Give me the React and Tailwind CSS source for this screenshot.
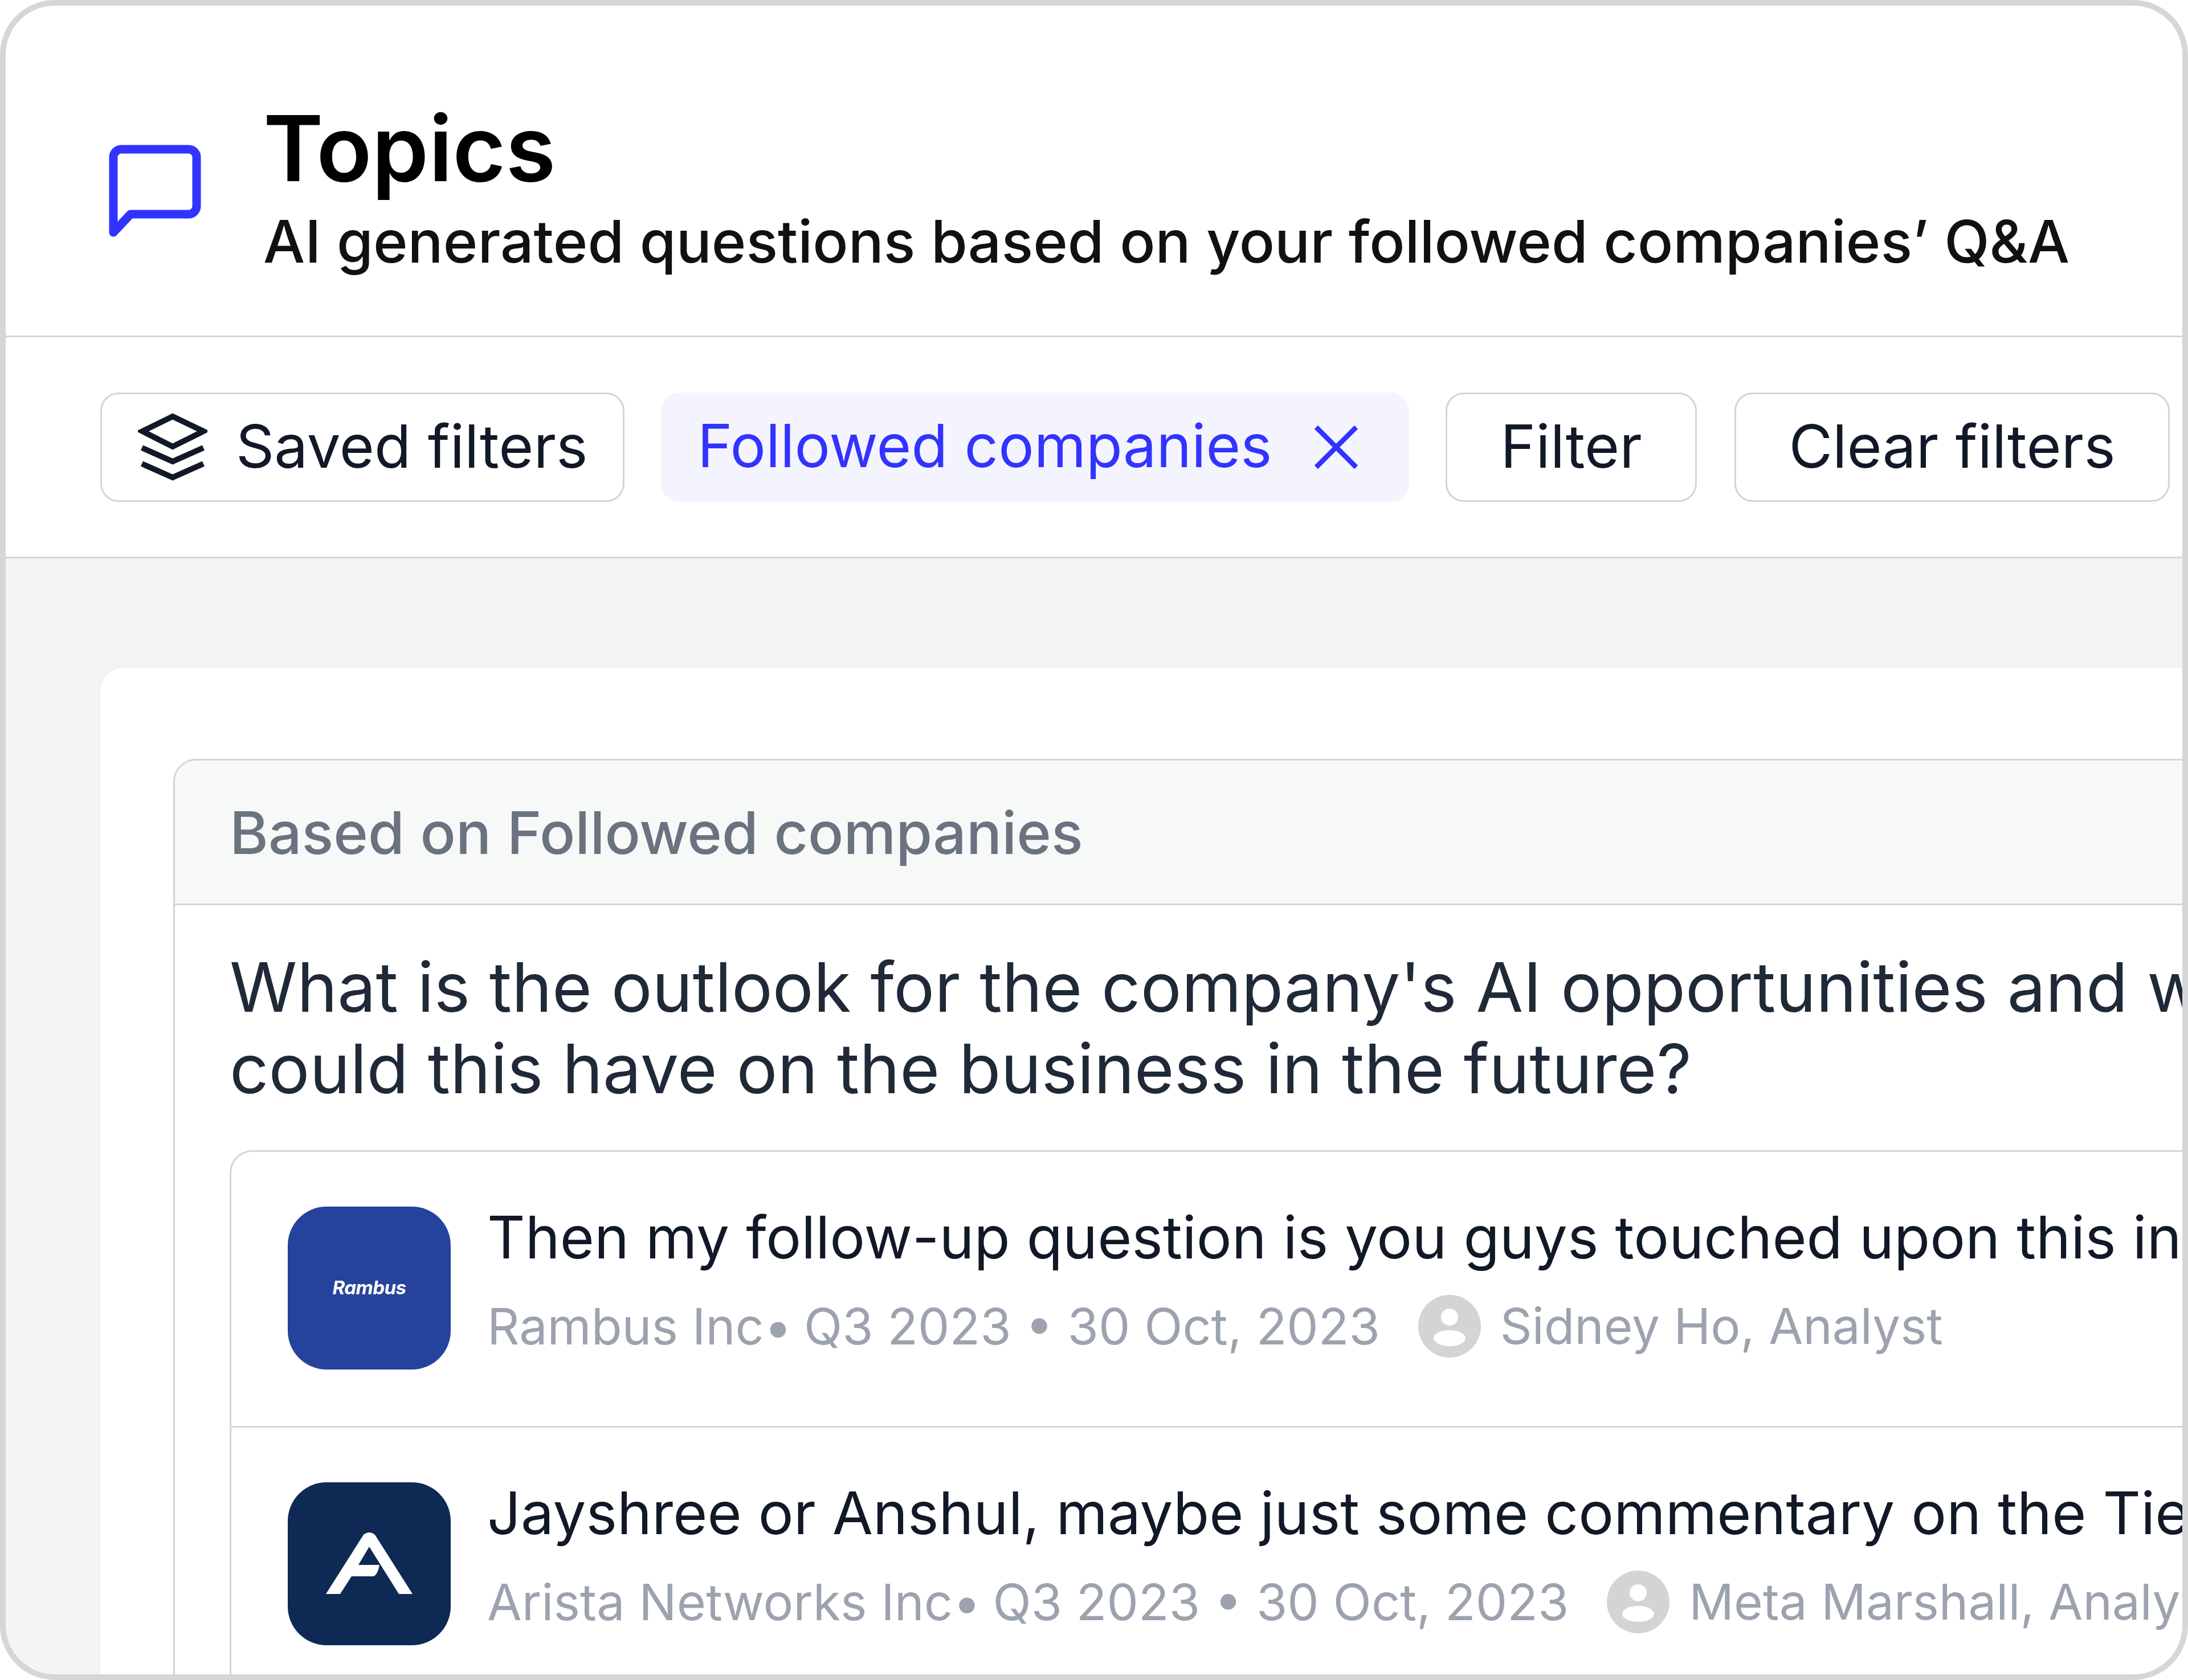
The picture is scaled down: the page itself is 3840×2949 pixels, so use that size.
const font = { fontFamily: "Inter, sans-serif" };

function Avatar() {
  return (
    <svg width="110" height="110" viewBox="0 0 110 110" className="shrink-0">
      <circle cx="55" cy="55" r="55" fill="#d4d4d4" />
      <circle cx="55" cy="39" r="15" fill="#fff" />
      <ellipse cx="55" cy="76" rx="28" ry="14" fill="#fff" />
    </svg>
  );
}

function Row({ logo, title, company, name, last }) {
  return (
    <div className={`flex items-start gap-[64px] pl-[99px] pt-[96px] h-[484px] ${last ? "" : "border-b-[3px] border-[#d1d5db]"}`}>
      {logo}
      <div className="flex flex-col whitespace-nowrap -mt-[6px]">
        <div className="text-[103.3px] leading-[120px] text-[#111827]">{title}</div>
        <div className="flex items-center mt-[36px] h-[120px] text-[88px] text-[#9ca3af]">
          <span>{company}<span className="-mr-[4px]">•</span> Q3 2023 • 30 Oct, 2023</span>
          <span className="ml-[67px] mr-[34px] flex"><Avatar /></span>
          <span className="text-[87.2px]">{name}</span>
        </div>
      </div>
    </div>
  );
}

function Btn({ children }) {
  return (
    <div className="h-[192px] shrink-0 flex items-center justify-center rounded-[32px] border-[3px] border-[#d1d5db] text-[105px] text-[#111827] bg-white">
      {children}
    </div>
  );
}

export default function App() {
  return (
    <div style={font} className="w-[3840px] h-[2949px] overflow-hidden rounded-[96px] border-[10px] border-[#d6d6d6] bg-[#f3f5f4] flex flex-col">
      <div className="h-[582px] shrink-0 bg-white border-b-[3px] border-[#d1d5db] flex items-center pl-[181px] pt-[60px]">
        <svg width="162" height="162" viewBox="0 0 162 162" fill="none" className="shrink-0 mt-[11px]">
          <path d="M8 150V22a14 14 0 0 1 14-14h118a14 14 0 0 1 14 14v86a14 14 0 0 1-14 14H38L8 154z" stroke="#3333ff" strokeWidth="15" strokeLinejoin="round" />
        </svg>
        <div className="ml-[109px] flex flex-col">
          <div className="text-[160px] leading-[176px] font-semibold text-black">Topics</div>
          <div className="text-[103.3px] leading-[128px] font-medium text-[#111111] mt-[12px] whitespace-nowrap">AI generated questions based on your followed companies’ Q&amp;A</div>
        </div>
      </div>
      <div className="h-[388px] shrink-0 bg-white border-b-[3px] border-[#d1d5db] flex items-center gap-[64px] pl-[166px]">
        <Btn>
          <div className="w-[914px] flex items-center pl-[63px] gap-[50px]">
            <svg width="122" height="122" viewBox="0 0 122 122" fill="none" stroke="#111827" strokeWidth="10" strokeLinejoin="miter" className="shrink-0">
              <path d="M61 7 115 33 61 60 8 33z" />
              <path d="M7 62 61 86 115 62" />
              <path d="M7 90 61 114 115 90" />
            </svg>
            <span className="pb-[4px]">Saved filters</span>
          </div>
        </Btn>
        <div className="h-[192px] w-[1313px] shrink-0 flex items-center pl-[64px] gap-[74px] rounded-[32px] bg-[#f4f4ff] text-[104.3px] text-[#3333ff]">
          <span className="whitespace-nowrap pb-[4px]">Followed companies</span>
          <svg width="78" height="78" viewBox="0 0 80 80" fill="none" stroke="#3333ff" strokeWidth="9" className="shrink-0">
            <path d="M4 4 76 76M76 4 4 76" />
          </svg>
        </div>
        <Btn><div className="w-[435px] text-center pb-[4px]">Filter</div></Btn>
        <div className="ml-[2px]">
          <Btn><div className="w-[758px] text-center pb-[4px]">Clear filters</div></Btn>
        </div>
      </div>
      <div className="flex-1 min-h-0 pl-[166px] pt-[192px]">
        <div className="w-[4600px] h-[1900px] bg-white rounded-[40px] pl-[128px] pt-[160px] shadow-[0_0_12px_rgba(0,0,0,0.03)]">
          <div className="rounded-[40px] border-[3px] border-[#d1d5db] h-[1700px]">
            <div className="h-[254px] bg-[#f7f9f8] rounded-t-[38px] border-b-[3px] border-[#d1d5db] flex items-center pl-[96px] pt-[3px] text-[103.4px] font-medium text-[#6b7280]">
              Based on Followed companies
            </div>
            <div className="pl-[96px] pt-[72px]">
              <div className="text-[120px] leading-[143px] text-[#1f2937] whitespace-nowrap">
                What is the outlook for the company's AI opportunities and what impact<br />could this have on the business in the future?
              </div>
              <div className="mt-[72px] rounded-[40px] border-[3px] border-[#d1d5db]">
                <Row
                  logo={
                    <div className="w-[286px] h-[286px] shrink-0 rounded-[68px] bg-[#25439c] flex items-center justify-center">
                      <span className="text-[33px] font-bold italic text-white tracking-[-0.5px]">Rambus</span>
                    </div>
                  }
                  title="Then my follow-up question is you guys touched upon this in the last call"
                  company="Rambus Inc"
                  name="Sidney Ho, Analyst"
                />
                <Row
                  last
                  logo={
                    <div className="w-[286px] h-[286px] shrink-0 rounded-[68px] bg-[#0e2a54] flex items-center justify-center">
                      <svg width="152" height="112" viewBox="0 0 152 112" className="-mt-[2px]">
                        <path d="M0 110 66 6Q76-2 86 6L152 110H128L76 27 57 59H94Q90 79 82 79H45L25 110z" fill="#fff" />
                      </svg>
                    </div>
                  }
                  title="Jayshree or Anshul, maybe just some commentary on the Tier 2 customers"
                  company="Arista Networks Inc"
                  name="Meta Marshall, Analyst"
                />
              </div>
            </div>
          </div>
        </div>
      </div>
    </div>
  );
}
